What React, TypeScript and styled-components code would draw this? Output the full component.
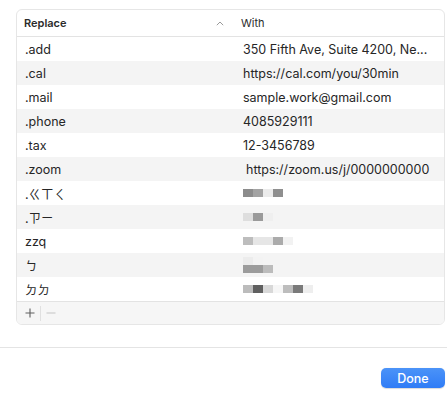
import styled, { createGlobalStyle } from "styled-components";

type Blot = { w: number; c: string };
type Row = { key: string; value?: string; blots?: Blot[][]; indent?: number };

const rows: Row[] = [
  { key: ".add", value: "350 Fifth Ave, Suite 4200, Ne..." },
  { key: ".cal", value: "https://cal.com/you/30min" },
  { key: ".mail", value: "sample.work@gmail.com" },
  { key: ".phone", value: "4085929111" },
  { key: ".tax", value: "12-3456789" },
  { key: ".zoom", value: "https://zoom.us/j/0000000000", indent: 3 },
  {
    key: ".ㄍㄒㄑ",
    blots: [
      [
        { w: 10, c: "#8c8c8c" },
        { w: 10, c: "#a3a3a3" },
        { w: 10, c: "#ebebeb" },
        { w: 10, c: "#8f8f8f" },
      ],
    ],
  },
  {
    key: ".ㄗㄧ",
    blots: [
      [
        { w: 10, c: "#dedede" },
        { w: 10, c: "#9a9a9a" },
        { w: 10, c: "#efefef" },
      ],
    ],
  },
  {
    key: "zzq",
    blots: [
      [
        { w: 10, c: "#bdbdbd" },
        { w: 10, c: "#e6e6e6" },
        { w: 10, c: "#e6e6e6" },
        { w: 10, c: "#ababab" },
        { w: 10, c: "#f2f2f2" },
      ],
    ],
  },
  {
    key: "ㄅ",
    blots: [
      [
        { w: 10, c: "#ececec" },
        { w: 10, c: "#f3f3f3" },
      ],
      [
        { w: 10, c: "#9c9c9c" },
        { w: 10, c: "#9c9c9c" },
        { w: 10, c: "#bcbcbc" },
      ],
    ],
  },
  {
    key: "ㄉㄉ",
    blots: [
      [
        { w: 10, c: "#bcbcbc" },
        { w: 10, c: "#5f5f5f" },
        { w: 10, c: "#d8d8d8" },
        { w: 10, c: "#f6f6f6" },
        { w: 10, c: "#bdbdbd" },
        { w: 10, c: "#7a7a7a" },
        { w: 10, c: "#eeeeee" },
      ],
    ],
  },
];

function App() {
  return (
    <>
      <GlobalStyle />
      <Page>
        <Table>
          <Header>
            <HeadCell>
              Replace
              <SortIcon viewBox="0 0 8 5">
                <path d="M0.8 4.2 L4 1 L7.2 4.2" />
              </SortIcon>
            </HeadCell>
            <HeadCell $light>With</HeadCell>
          </Header>
          {rows.map((row, i) => (
            <BodyRow key={row.key} $striped={i % 2 === 1}>
              <KeyCell>{row.key}</KeyCell>
              <ValueCell $indent={row.indent ?? 0}>
                {row.value}
                {row.blots ? (
                  <Blur>
                    {row.blots.map((line, j) => (
                      <BlurLine key={j}>
                        {line.map((b, k) => (
                          <Blot key={k} $w={b.w} $c={b.c} />
                        ))}
                      </BlurLine>
                    ))}
                  </Blur>
                ) : null}
              </ValueCell>
            </BodyRow>
          ))}
          <Footer>
            <ToolButton>
              <svg viewBox="0 0 10 10">
                <path d="M5 0.5 V9.5 M0.5 5 H9.5" />
              </svg>
            </ToolButton>
            <ToolDivider />
            <ToolButton $disabled>
              <svg viewBox="0 0 10 10">
                <path d="M0.5 5 H9.5" />
              </svg>
            </ToolButton>
          </Footer>
        </Table>
        <Separator />
        <Actions>
          <DoneButton>Done</DoneButton>
        </Actions>
      </Page>
    </>
  );
}

const GlobalStyle = createGlobalStyle`
  html, body {
    margin: 0;
    padding: 0;
    background: #ffffff;
  }
  body {
    font-family: Inter, "Noto Sans CJK TC", "Liberation Sans", sans-serif;
    color: #262626;
    -webkit-font-smoothing: antialiased;
  }
`;

const Page = styled.div`
  width: 447px;
  height: 404px;
  display: flex;
  flex-direction: column;
  padding-top: 9px;
  box-sizing: border-box;
`;

const Table = styled.div`
  margin: 0 2px 0 16px;
  border: 1px solid #e6e6e6;
  border-radius: 6px;
  overflow: hidden;
  background: #ffffff;
`;

const Header = styled.div`
  display: grid;
  grid-template-columns: 217px 1fr;
  height: 26px;
  border-bottom: 1px solid #e3e3e3;
  align-items: center;
`;

const HeadCell = styled.div<{ $light?: boolean }>`
  display: flex;
  align-items: center;
  justify-content: space-between;
  padding: 0 10px 0 7px;
  font-size: 11px;
  font-weight: ${(p) => (p.$light ? 400 : 600)};
  color: #2b2b2b;
`;

const SortIcon = styled.svg`
  width: 8px;
  height: 5px;
  fill: none;
  stroke: #9a9a9a;
  stroke-width: 1;
`;

const BodyRow = styled.div<{ $striped: boolean }>`
  display: grid;
  grid-template-columns: 217px 1fr;
  height: 24px;
  align-items: center;
  background: ${(p) => (p.$striped ? "#f4f4f4" : "#ffffff")};
`;

const KeyCell = styled.div`
  padding-left: 8px;
  font-size: 12.5px;
  color: #262626;
  white-space: nowrap;
`;

const ValueCell = styled.div<{ $indent: number }>`
  padding-left: ${(p) => 9 + p.$indent}px;
  font-size: 12.5px;
  color: #262626;
  white-space: nowrap;
  overflow: hidden;
`;

const Blur = styled.div`
  display: flex;
  flex-direction: column;
`;

const BlurLine = styled.div`
  display: flex;
  height: 8px;
`;

const Blot = styled.span<{ $w: number; $c: string }>`
  display: block;
  width: ${(p) => p.$w}px;
  height: 100%;
  background: ${(p) => p.$c};
`;

const Footer = styled.div`
  display: flex;
  align-items: center;
  height: 22px;
  background: #f6f6f6;
  border-top: 1px solid #e3e3e3;
  padding-left: 3px;
`;

const ToolButton = styled.div<{ $disabled?: boolean }>`
  width: 20px;
  height: 22px;
  display: flex;
  align-items: center;
  justify-content: center;

  svg {
    width: 10px;
    height: 10px;
    fill: none;
    stroke: ${(p) => (p.$disabled ? "#c4c4c4" : "#5e5e5e")};
    stroke-width: 1.1;
  }
`;

const ToolDivider = styled.div`
  width: 1px;
  height: 15px;
  background: #e0e0e0;
`;

const Separator = styled.div`
  margin-top: 22px;
  height: 1px;
  background: #e4e4e4;
`;

const Actions = styled.div`
  display: flex;
  justify-content: flex-end;
  padding: 20px 2px 0 0;
`;

const DoneButton = styled.button`
  width: 64px;
  height: 20px;
  border: none;
  border-radius: 5px;
  background: linear-gradient(#4b93f8, #2f7cf6);
  box-shadow: 0 0.5px 1px rgba(0, 0, 0, 0.15);
  color: #ffffff;
  font-family: Inter, "Liberation Sans", sans-serif;
  font-size: 12.5px;
  font-weight: 500;
  padding: 0;
`;

export default App;
